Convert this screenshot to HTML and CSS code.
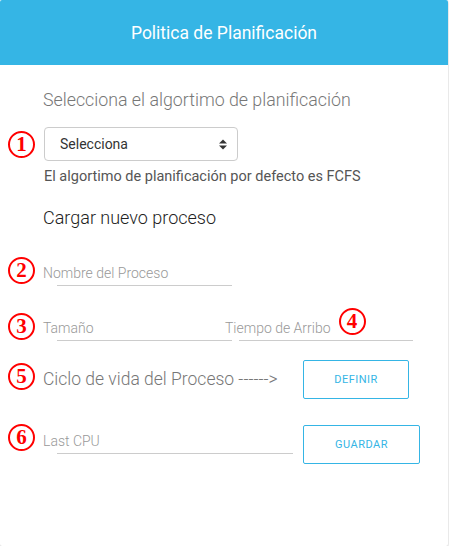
FILE: index.html
```html
<!DOCTYPE html>
<html lang="es">
<head>
<meta charset="utf-8">
<title>Politica de Planificación</title>
<link rel="stylesheet" href="styles.css">
</head>
<body>
<div class="card">
  <div class="card-header">Politica de Planificación</div>
  <div class="card-body">
    <div class="section-title">Selecciona el algortimo de planificación</div>
    <div class="row row-select">
      <span class="marker">1</span>
      <div class="select">
        <span>Selecciona</span>
        <svg class="caret" width="8" height="11" viewBox="0 0 8 11"><path d="M0 4.5 L4 0.5 L8 4.5 Z M0 6.5 L4 10.5 L8 6.5 Z" fill="#333"/></svg>
      </div>
    </div>
    <div class="help">El algortimo de planificación por defecto es FCFS</div>
    <div class="subtitle">Cargar nuevo proceso</div>

    <div class="row row-name">
      <span class="marker">2</span>
      <div class="field field-name">
        <div class="label">Nombre del Proceso</div>
        <div class="line"></div>
      </div>
    </div>

    <div class="row row-size">
      <span class="marker">3</span>
      <div class="field field-size">
        <div class="label">Tamaño</div>
        <div class="line"></div>
      </div>
      <div class="field field-arrive">
        <div class="label">Tiempo de Arribo <span class="marker marker-inline">4</span></div>
        <div class="line"></div>
      </div>
    </div>

    <div class="row row-cycle">
      <span class="marker">5</span>
      <div class="cycle-text">Ciclo de vida del Proceso ------&gt;</div>
      <button class="btn btn-definir">DEFINIR</button>
    </div>

    <div class="row row-cpu">
      <span class="marker">6</span>
      <div class="field field-cpu">
        <div class="label">Last CPU</div>
        <div class="line"></div>
      </div>
      <button class="btn btn-guardar">GUARDAR</button>
    </div>
  </div>
</div>
</body>
</html>
```
FILE: styles.css
```css
html, body {
  margin: 0;
  padding: 0;
  background: #ffffff;
}
body {
  font-family: Roboto, "Liberation Sans", sans-serif;
}
.card {
  width: 448px;
  height: 546px;
  background: #fff;
  border-radius: 2px;
  box-shadow: 0 1px 3px rgba(0,0,0,0.25);
  overflow: hidden;
}
.card-header {
  height: 65px;
  background: #35b5e5;
  color: #fff;
  font-size: 17.5px;
  display: flex;
  align-items: center;
  justify-content: center;
}
.card-body {
  padding-top: 25px;
}
.section-title {
  margin-left: 43px;
  font-size: 17.8px;
  font-weight: 300;
  color: #777;
  line-height: 20px;
}
.row {
  display: flex;
  align-items: flex-start;
}
.marker {
  box-sizing: border-box;
  width: 27px;
  height: 27px;
  border: 2px solid #f00;
  border-radius: 50%;
  color: #f00;
  font-family: "Liberation Serif", "DejaVu Serif", serif;
  font-weight: bold;
  font-size: 21px;
  line-height: 1;
  display: flex;
  align-items: center;
  justify-content: center;
  margin-left: 8px;
  margin-right: 8px;
  flex: none;
}
.row-select {
  margin-top: 17px;
  align-items: center;
}
.select {
  box-sizing: border-box;
  width: 194px;
  height: 34px;
  margin-left: 1px;
  border: 1px solid #ccc;
  border-radius: 4px;
  display: flex;
  align-items: center;
  justify-content: space-between;
  padding: 0 10px 0 15px;
  font-size: 14px;
  color: #333;
}
.help {
  margin-top: 6px;
  margin-left: 44px;
  font-size: 14.5px;
  line-height: 20px;
  color: #555;
}
.subtitle {
  margin-top: 20px;
  margin-left: 43px;
  font-size: 18px;
  font-weight: 300;
  line-height: 22px;
  color: #222;
}
.field {
  display: flex;
  flex-direction: column;
}
.label {
  font-size: 14px;
  font-weight: 300;
  line-height: 20px;
  height: 20px;
  color: #999;
  display: flex;
  align-items: flex-start;
}
.line {
  margin-left: 14px;
  margin-top: 2px;
  border-bottom: 1px solid #ccc;
}
.row-name {
  margin-top: 28px;
}
.field-name {
  width: 189px;
  margin-top: 6px;
}
.row-size {
  margin-top: 27px;
}
.field-size {
  width: 189px;
  margin-top: 5px;
}
.field-arrive {
  width: 188px;
  margin-left: -7px;
  margin-top: 5px;
}
.marker-inline {
  margin-left: 8px;
  margin-right: 0;
  margin-top: -10px;
}
.row-cycle {
  margin-top: 19px;
}
.row-cycle .marker {
  margin-top: 3px;
}
.cycle-text {
  font-size: 17.5px;
  font-weight: 300;
  line-height: 22px;
  color: #777;
  width: 260px;
  margin-top: 8px;
}
.btn {
  box-sizing: border-box;
  background: #fff;
  border: 1px solid #35b5e5;
  border-radius: 2px;
  color: #35b5e5;
  font-family: Roboto, "Liberation Sans", sans-serif;
  font-size: 11px;
  letter-spacing: 0.5px;
  padding: 0;
  height: 39px;
}
.btn-definir {
  width: 106px;
}
.row-cpu {
  margin-top: 25px;
}
.field-cpu {
  width: 250px;
  margin-top: 7px;
}
.btn-guardar {
  width: 117px;
  margin-left: 10px;
  margin-top: 1px;
}
```
